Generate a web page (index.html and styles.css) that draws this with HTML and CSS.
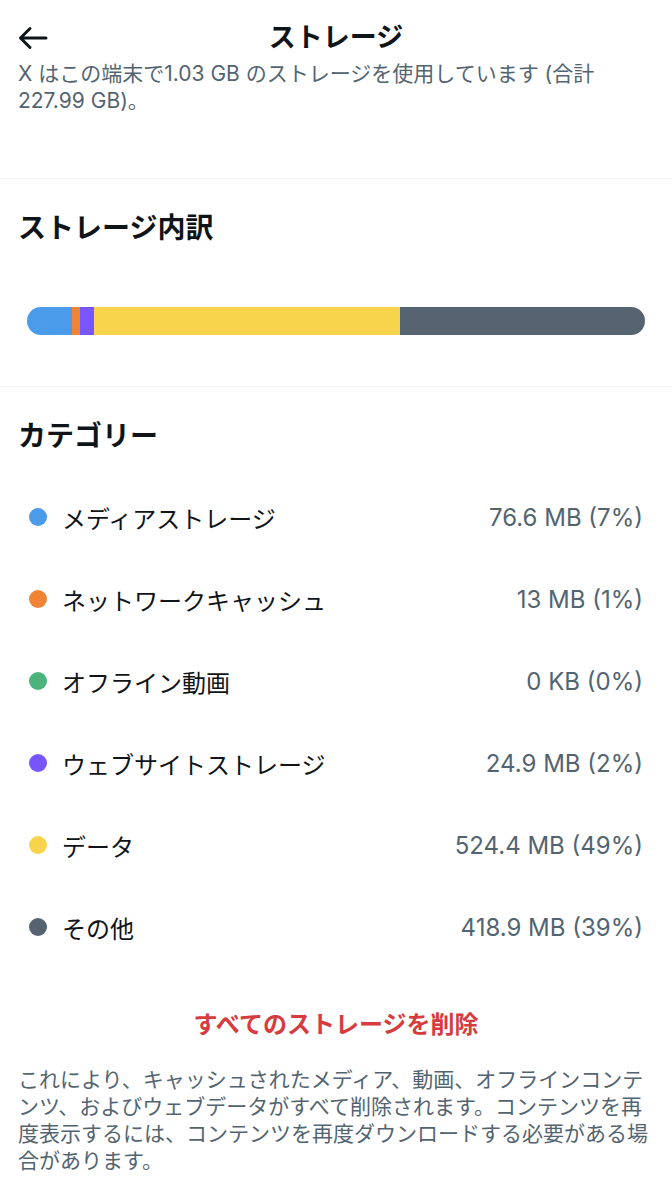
FILE: index.html
```html
<!DOCTYPE html>
<html lang="ja">
<head>
    <meta charset="UTF-8">
    <meta name="viewport" content="width=device-width, initial-scale=1.0">
    <title>ストレージ</title>
    <link rel="stylesheet" href="styles.css">
</head>
<body>
    <div class="header">
        <button class="back" aria-label="戻る">
            <svg width="30" height="24" viewBox="0 0 30 24">
                <path d="M28 12H3M12 2.5L2.5 12 12 21.5" fill="none" stroke="#0f1419" stroke-width="3" stroke-linecap="round" stroke-linejoin="round"/>
            </svg>
        </button>
        <h1>ストレージ</h1>
    </div>
    <p class="intro">X はこの端末で1.03 GB のストレージを使用しています (合計 227.99 GB)。</p>

    <div class="section">
        <h2>ストレージ内訳</h2>
        <div class="bar">
            <span class="seg media" style="width: 7.3%"></span>
            <span class="seg network" style="width: 1.3%"></span>
            <span class="seg web" style="width: 2.3%"></span>
            <span class="seg data" style="width: 49.5%"></span>
            <span class="seg other rest"></span>
        </div>
    </div>

    <div class="section categories">
        <h2>カテゴリー</h2>
        <ul class="list">
            <li><span class="dot media"></span><span class="name">メディアストレージ</span><span class="size">76.6 MB (7%)</span></li>
            <li><span class="dot network"></span><span class="name">ネットワークキャッシュ</span><span class="size">13 MB (1%)</span></li>
            <li><span class="dot offline"></span><span class="name">オフライン動画</span><span class="size">0 KB (0%)</span></li>
            <li><span class="dot web"></span><span class="name">ウェブサイトストレージ</span><span class="size">24.9 MB (2%)</span></li>
            <li><span class="dot data"></span><span class="name">データ</span><span class="size">524.4 MB (49%)</span></li>
            <li><span class="dot other"></span><span class="name">その他</span><span class="size">418.9 MB (39%)</span></li>
        </ul>
        <button class="clear">すべてのストレージを削除</button>
        <p class="note">これにより、キャッシュされたメディア、動画、オフラインコンテンツ、およびウェブデータがすべて削除されます。コンテンツを再度表示するには、コンテンツを再度ダウンロードする必要がある場合があります。</p>
    </div>
</body>
</html>
```

FILE: styles.css
```css
body {
    margin: 0;
    font-family: Inter, "Noto Sans CJK JP", sans-serif;
    color: #0f1419;
    background: #fff;
}
.header {
    height: 60px;
    box-sizing: border-box;
    padding-top: 21px;
    display: flex;
    align-items: flex-start;
    justify-content: center;
    position: relative;
}
.header h1 {
    margin: 0;
    font-size: 27px;
    font-weight: 700;
    line-height: 34px;
}
.back {
    position: absolute;
    left: 18px;
    top: 26px;
    padding: 0;
    border: none;
    background: none;
    line-height: 0;
}
.intro {
    margin: 0;
    padding: 0 18px 64px;
    font-size: 21px;
    line-height: 27px;
    color: #536471;
    border-bottom: 1px solid #eff3f4;
}
.section {
    padding-top: 32px;
    border-bottom: 1px solid #eff3f4;
}
.section h2 {
    margin: 0;
    padding: 0 18px;
    font-size: 28px;
    font-weight: 700;
    line-height: 34px;
}
.bar {
    display: flex;
    height: 28px;
    margin: 62px 27px 51px;
    border-radius: 14px;
    overflow: hidden;
}
.seg {
    display: block;
    height: 100%;
}
.rest {
    flex: 1;
}
.media { background: #4a9be9; }
.network { background: #ef8436; }
.offline { background: #4db37c; }
.web { background: #7856ff; }
.data { background: #f8d44c; }
.other { background: #566370; }
.categories {
    border-bottom: none;
}
.list {
    list-style: none;
    margin: 23px 0 0;
    padding: 0;
}
.list li {
    height: 82px;
    display: flex;
    align-items: center;
    padding: 0 29px;
    font-size: 24px;
}
.dot {
    width: 18px;
    height: 18px;
    border-radius: 50%;
    margin-right: 15px;
    flex-shrink: 0;
}
.name {
    flex: 1;
}
.size {
    color: #536471;
    font-size: 24px;
}
.clear {
    display: block;
    width: 100%;
    margin-top: 40px;
    padding: 0;
    border: none;
    background: none;
    font-family: inherit;
    font-size: 24px;
    font-weight: 700;
    line-height: 34px;
    color: #d63b3e;
    text-align: center;
}
.note {
    margin: 24px 0 0;
    padding: 0 18px;
    font-size: 21px;
    line-height: 27px;
    color: #536471;
}
```
